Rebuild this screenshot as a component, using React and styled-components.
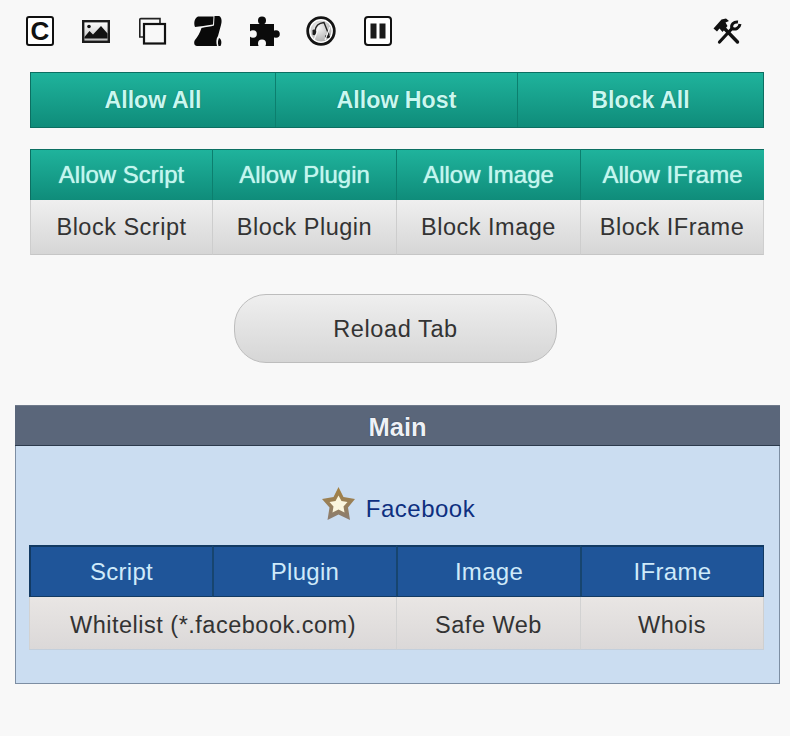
import React from "react";
import styled, { createGlobalStyle } from "styled-components";

const Global = createGlobalStyle`
  html, body { margin: 0; padding: 0; background: #f8f8f8; }
  body { font-family: "Liberation Sans", Arial, sans-serif; }
`;

const Page = styled.div`
  width: 790px;
  height: 736px;
  box-sizing: border-box;
  padding-top: 16px;
  background: #f8f8f8;
  overflow: hidden;
`;

const Toolbar = styled.div`
  display: flex;
  align-items: flex-start;
  gap: 28px;
  width: 716px;
  height: 30px;
  margin-left: 26px;
  color: #111;
`;

const LetterIcon = styled.div`
  width: 28px;
  height: 30px;
  box-sizing: border-box;
  border: 2px solid #111;
  border-radius: 3px;
  background: #fff;
  display: flex;
  align-items: center;
  justify-content: center;
  font-size: 26px;
  font-weight: 700;
  line-height: 1;
`;

const Icon = styled.svg`
  display: block;
  width: ${p => p.$w || 28}px;
  height: 30px;
  flex: none;
  overflow: visible;
`;

const PuzzleIcon = styled(Icon)`
  margin-right: -2px;
`;

const ToolsIcon = styled(Icon)`
  margin-left: auto;
`;

const GlobalBar = styled.div`
  display: grid;
  grid-template-columns: 244px 242px 1fr;
  width: 734px;
  height: 56px;
  box-sizing: border-box;
  margin: 26px 0 0 30px;
  border: 1px solid #0c6f62;
`;

const tealFill = `linear-gradient(#1fb39c, #0f8c7a)`;
const greyFill = `linear-gradient(#efefef, #d6d6d6)`;

const BarCell = styled.div`
  display: flex;
  align-items: center;
  justify-content: center;
  background: ${tealFill};
  border-left: ${p => (p.$first ? "none" : "1px solid #0c7f6e")};
  color: #c9f8f0;
  font-size: 23.2px;
  font-weight: 700;
  text-shadow: 0 0 1px #0a5c52;
`;

const TypeGrid = styled.div`
  display: grid;
  grid-template-columns: 182px 184px 184px 184px;
  width: 734px;
  margin: 21px 0 0 30px;
`;

const AllowCell = styled.div`
  height: 51px;
  display: flex;
  align-items: center;
  justify-content: center;
  box-sizing: border-box;
  background: ${tealFill};
  border-top: 1px solid #0c6f62;
  border-left: 1px solid ${p => (p.$first ? "#0c6f62" : "#0c7f6e")};
  color: #c4f6ee;
  font-size: 24px;
  text-shadow: 0 0 1px #c4f6ee;
`;

const GreyCell = styled.div`
  grid-column: span ${p => p.$span || 1};
  height: ${p => p.$h || 55}px;
  display: flex;
  align-items: center;
  justify-content: center;
  box-sizing: border-box;
  background: ${greyFill};
  border-left: 1px solid #cdcdcd;
  border-bottom: 1px solid #c6c6c6;
  color: #333;
  font-size: 23.5px;
  letter-spacing: 0.5px;
  &:last-child { border-right: 1px solid #cfcfcf; }
`;

const ReloadRow = styled.div`
  display: flex;
  width: 790px;
  justify-content: flex-start;
  margin: 39px 0 0 234px;
`;

const ReloadButton = styled.div`
  width: 323px;
  height: 69px;
  box-sizing: border-box;
  padding-top: 2px;
  border: 1px solid #bdbdbd;
  border-radius: 32px;
  background: ${greyFill};
  display: flex;
  align-items: center;
  justify-content: center;
  color: #333;
  font-size: 23.5px;
  letter-spacing: 0.6px;
`;

const Panel = styled.section`
  width: 765px;
  height: 279px;
  box-sizing: border-box;
  margin: 42px 0 0 15px;
  border: 1px solid #7d8ea3;
  border-top: none;
  background: #cbddf1;
  display: flex;
  flex-direction: column;
`;

const PanelTitle = styled.h2`
  margin: 0 -1px;
  height: 41px;
  box-sizing: border-box;
  padding-top: 3px;
  display: flex;
  align-items: center;
  justify-content: center;
  background: #5a667a;
  border-bottom: 1px solid #2c3a4c;
  border-top: 1px solid #6f7a8b;
  color: #eef1f6;
  font-size: 25.5px;
  font-weight: 700;
  text-shadow: 0 0 1px #1f2836;
`;

const SiteRow = styled.div`
  display: flex;
  align-items: center;
  justify-content: center;
  gap: 11px;
  height: 34px;
  margin: 41px 0 0 2px;
  color: #0e2f80;
  font-size: 24px;
  letter-spacing: 0.5px;
`;

const SiteName = styled.span`
  margin-top: 10px;
`;

const SiteTable = styled.div`
  display: grid;
  grid-template-columns: 183px 184px 184px 1fr;
  width: 735px;
  margin: 24px 0 0 13px;
`;

const BlueCell = styled.div`
  height: 52px;
  display: flex;
  align-items: center;
  justify-content: center;
  box-sizing: border-box;
  background: #1f5599;
  border-top: 2px solid #123a63;
  border-bottom: 1px solid #123a63;
  border-left: 2px solid ${p => (p.$first ? "#123a63" : "#17456f")};
  &:nth-child(4) { border-right: 1px solid #123a63; }
  color: #cfeafa;
  font-size: 24px;
  letter-spacing: 0.3px;
`;

const SiteGrey = styled(GreyCell)`
  padding-top: 4px;
  background: linear-gradient(#e9e6e4, #dbd8d8);
  border-bottom-color: #c3cfdc;
  border-left-color: #d2d2d2;
`;

const ImageGlyph = () => (
  <Icon viewBox="0 0 28 30">
    <defs>
      <linearGradient id="pic" x1="0" y1="0" x2="0" y2="1">
        <stop offset="0" stopColor="#fff" />
        <stop offset="1" stopColor="#bbb" />
      </linearGradient>
    </defs>
    <rect x="1.2" y="5.2" width="25.6" height="20.6" fill="url(#pic)" stroke="#1c1c1c" strokeWidth="2.4" />
    <circle cx="7" cy="10.5" r="1.8" fill="#111" />
    <path fill="#111" d="M2.5 21L7.5 15L11 18.5L19 10L25.5 17.5V22.5H2.5Z" />
  </Icon>
);

const WindowsGlyph = () => (
  <Icon viewBox="0 0 28 30">
    <path fill="none" stroke="#222" strokeWidth="1.6" d="M6 21H1.8V3.5Q1.8 2.6 2.8 2.6H22V7" />
    <rect x="6" y="8" width="21" height="19.5" fill="#f8f8f8" stroke="#111" strokeWidth="2.2" />
  </Icon>
);

const ScrollGlyph = () => (
  <Icon viewBox="0 0 28 30">
    <path fill="#0a0a0a" d="M4 0.5H19.5L19 8.5C12 9.5 6 10.5 1 11C-0.5 7 0.5 2 4 0.5Z" />
    <path fill="#0a0a0a" d="M20.5 0H25C28 1 28 6 27 9L24 20C22 23 22 26 23 30H3C0 30 -0.5 26 1 24C3.5 21 6 17 7.5 12C12 11 17 10.5 20 9.5Z" />
    <path fill="#0a0a0a" d="M25 22C27.5 23 28 27 26.5 30H24.5C23.5 27 24 24 25 22Z" />
  </Icon>
);

const PuzzleGlyph = () => (
  <PuzzleIcon viewBox="0 0 30 30" $w={30}>
    <rect x="0" y="8" width="24" height="22" fill="#0b0b0b" />
    <circle cx="12" cy="4.5" r="4" fill="#0b0b0b" />
    <rect x="10" y="5" width="4" height="4" fill="#0b0b0b" />
    <circle cx="26" cy="18" r="3.8" fill="#0b0b0b" />
    <circle cx="3" cy="18" r="3.8" fill="#f8f8f8" />
    <circle cx="12" cy="27.5" r="4" fill="#f8f8f8" />
    <rect x="9" y="28" width="6" height="2" fill="#f8f8f8" />
  </PuzzleIcon>
);

const GlobeGlyph = () => (
  <Icon viewBox="0 0 30 30" $w={30}>
    <defs>
      <radialGradient id="orb" cx="0.4" cy="0.35" r="0.75">
        <stop offset="0" stopColor="#f6f6f6" />
        <stop offset="1" stopColor="#a8a8a8" />
      </radialGradient>
    </defs>
    <circle cx="15" cy="15" r="13.3" fill="#fff" stroke="#141414" strokeWidth="2.8" />
    <circle cx="15" cy="15" r="10.5" fill="url(#orb)" />
    <path fill="none" stroke="#222" strokeWidth="1.4" d="M9 15C9.5 10 13 7 18 6.5L23 19" />
    <path fill="#1c1c1c" d="M6.5 14C8 12.5 10.5 14 10.5 16.5C10.5 19 8 20 6.5 18.5Z" />
    <ellipse cx="21.5" cy="20.5" rx="2.6" ry="1.8" fill="#1c1c1c" />
    <path fill="none" stroke="#f8f8f8" strokeWidth="1.2" d="M13 11L8 24M19 24L24 11" />
  </Icon>
);

const PauseGlyph = () => (
  <Icon viewBox="0 0 28 30">
    <rect x="1" y="1" width="26" height="28" rx="3" fill="#fff" stroke="#111" strokeWidth="2" />
    <rect x="6.5" y="7.5" width="6" height="15" fill="#1a1a1a" />
    <rect x="15.5" y="7.5" width="6" height="15" fill="#1a1a1a" />
  </Icon>
);

const ToolsGlyph = () => (
  <ToolsIcon viewBox="0 0 30 30" $w={30}>
    <path fill="none" stroke="#111" strokeWidth="3.4" strokeLinecap="round" d="M12 12L25.5 26" />
    <path fill="#111" d="M1.5 12.5L9.5 3.5L14 2.5L17 5L13.5 6.5L15.5 10L10.5 16L7.5 12.5L5 15.5Z" />
    <path fill="none" stroke="#111" strokeWidth="3.2" strokeLinecap="round" d="M20 12.5L7.5 26" />
    <path fill="none" stroke="#111" strokeWidth="3" d="M26 6C22 5.5 18.5 8.5 20 12.5C23.5 14 27.5 12 28 8" />
  </ToolsIcon>
);

const StarGlyph = () => (
  <svg width="33" height="34" viewBox="0 0 33 34">
    <defs>
      <linearGradient id="star" x1="0" y1="0" x2="0" y2="1">
        <stop offset="0" stopColor="#a5813f" />
        <stop offset="1" stopColor="#8b7d72" />
      </linearGradient>
    </defs>
    <path fill="url(#star)" d="M16.5 0L21.5 10L33 12L26 20.5L28 33L16.5 27.5L5.5 33L7.5 20.5L0 12L11.5 10Z" />
    <path fill="#fbf6de" d="M16.5 8.5L19.5 14L25.5 15L21.5 19.5L22.5 25.5L16.5 22.5L10.5 25.5L11.5 19.5L7.5 15L13.5 14Z" />
  </svg>
);

const App = () => (
  <Page>
    <Global />
    <Toolbar>
      <LetterIcon>C</LetterIcon>
      <ImageGlyph />
      <WindowsGlyph />
      <ScrollGlyph />
      <PuzzleGlyph />
      <GlobeGlyph />
      <PauseGlyph />
      <ToolsGlyph />
    </Toolbar>

    <GlobalBar>
      <BarCell $first>Allow All</BarCell>
      <BarCell>Allow Host</BarCell>
      <BarCell>Block All</BarCell>
    </GlobalBar>

    <TypeGrid>
      <AllowCell $first>Allow Script</AllowCell>
      <AllowCell>Allow Plugin</AllowCell>
      <AllowCell>Allow Image</AllowCell>
      <AllowCell>Allow IFrame</AllowCell>
      <GreyCell>Block Script</GreyCell>
      <GreyCell>Block Plugin</GreyCell>
      <GreyCell>Block Image</GreyCell>
      <GreyCell>Block IFrame</GreyCell>
    </TypeGrid>

    <ReloadRow>
      <ReloadButton>Reload Tab</ReloadButton>
    </ReloadRow>

    <Panel>
      <PanelTitle>Main</PanelTitle>
      <SiteRow>
        <StarGlyph />
        <SiteName>Facebook</SiteName>
      </SiteRow>
      <SiteTable>
        <BlueCell $first>Script</BlueCell>
        <BlueCell>Plugin</BlueCell>
        <BlueCell>Image</BlueCell>
        <BlueCell>IFrame</BlueCell>
        <SiteGrey $span={2} $h={53}>Whitelist (*.facebook.com)</SiteGrey>
        <SiteGrey $h={53}>Safe Web</SiteGrey>
        <SiteGrey $h={53}>Whois</SiteGrey>
      </SiteTable>
    </Panel>
  </Page>
);

export default App;
